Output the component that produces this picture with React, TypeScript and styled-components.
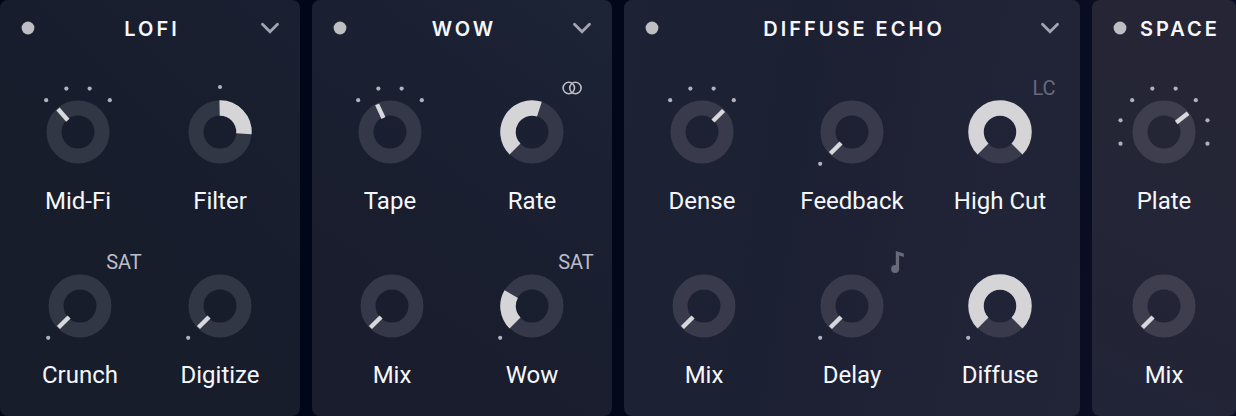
import React from "react";
import styled, { createGlobalStyle } from "styled-components";

const GlobalStyle = createGlobalStyle`
  *, *::before, *::after { box-sizing: border-box; }
  body {
    margin: 0;
    background: linear-gradient(100deg, #02051a 0%, #020719 50%, #0d1026 100%);
    color: #f6f7fb;
    font-family: Roboto, "Liberation Sans", sans-serif;
  }
`;

const Rack = styled.main`
  display: grid;
  grid-template-columns: 25fr 25fr 38fr 12fr;
  gap: 12px;
`;

const Panel = styled.section<{ $fill: string }>`
  display: flex;
  flex-direction: column;
  min-width: 0;
  padding-bottom: 26px;
  border-radius: 8px;
  background: ${(p) => p.$fill};
`;

const Header = styled.header`
  display: flex;
  align-items: center;
  height: 56px;
  padding: 0 16px 0 20px;
  margin-bottom: 28px;
`;

const IconButton = styled.button`
  display: grid;
  place-items: center;
  flex: none;
  padding: 0;
  border: 0;
  background: none;
  color: #a3a5b1;
  cursor: pointer;
`;

const PowerButton = styled(IconButton)`
  width: 16px;
  height: 24px;
`;

const PowerLight = styled.svg`
  display: block;
`;

const ExpandButton = styled(IconButton)`
  width: 28px;
  height: 28px;
`;

const Title = styled.h2<{ $compact?: boolean }>`
  flex: 1;
  margin: 0;
  padding: 2px 0 0 12px;
  font: 600 20px/24px Inter, Roboto, sans-serif;
  letter-spacing: 3px;
  text-align: ${(p) => (p.$compact ? "left" : "center")};
  white-space: nowrap;
`;

const Rows = styled.div`
  display: flex;
  flex-direction: column;
  gap: 42px;
`;

const Row = styled.div<{ $columns: string; $padding: string }>`
  display: grid;
  grid-template-columns: ${(p) => p.$columns};
  padding: ${(p) => p.$padding};
`;

const Cell = styled.div`
  display: flex;
  flex-direction: column;
  align-items: center;
  gap: 6px;
  min-width: 0;
`;

const DialBox = styled.div`
  position: relative;
  width: 104px;
  height: 96px;
`;

const DialArt = styled.svg`
  display: block;
`;

const DialInput = styled.input`
  position: absolute;
  inset: 16px 20px;
  width: 64px;
  height: 64px;
  margin: 0;
  opacity: 0;
  cursor: pointer;
`;

const Badge = styled.button<{ $dim?: boolean }>`
  position: absolute;
  top: -8px;
  right: -16px;
  display: grid;
  place-items: center;
  width: 48px;
  height: 24px;
  padding: 0;
  border: 0;
  background: none;
  color: ${(p) => (p.$dim ? "#686a79" : "#bcbdc9")};
  font: 400 20px/24px Roboto, sans-serif;
  cursor: pointer;
`;

const KnobLabel = styled.label`
  font-size: 24px;
  line-height: 30px;
  white-space: nowrap;
`;

type BadgeKind = "SAT" | "LC" | "link" | "note";

interface KnobSpec {
  label: string;
  /* Angles are degrees clockwise from twelve o'clock. */
  angle: number;
  from?: number;
  dots?: number[];
  badge?: BadgeKind;
}

interface RowSpec {
  columns: string;
  padding: string;
  knobs: KnobSpec[];
}

interface PanelSpec {
  title: string;
  fill: string;
  ring: string;
  compact?: boolean;
  rows: RowSpec[];
}

const FOUR = [-45, -15, 15, 45];
const EIGHT = [-105, -75, -45, -15, 15, 45, 75, 105];
const START = [-135];

const panels: PanelSpec[] = [
  {
    title: "LOFI",
    fill: "linear-gradient(225deg, #1a2031 0%, #181d2d 45%, #181d2c 100%)",
    ring: "#323745",
    rows: [
      {
        columns: "1fr 1fr",
        padding: "0 9px 0 7px",
        knobs: [
          { label: "Mid-Fi", angle: -41, dots: FOUR },
          { label: "Filter", angle: 94, from: -1, dots: [0] },
        ],
      },
      {
        columns: "1fr 1fr",
        padding: "0 10px",
        knobs: [
          { label: "Crunch", angle: -135, dots: START, badge: "SAT" },
          { label: "Digitize", angle: -135, dots: START },
        ],
      },
    ],
  },
  {
    title: "WOW",
    fill: "linear-gradient(215deg, #1c2436 0%, #1a1f31 40%, #191d2d 75%, #1a1d2e 100%)",
    ring: "#343848",
    rows: [
      {
        columns: "1fr 1fr",
        padding: "0 9px 0 7px",
        knobs: [
          { label: "Tape", angle: -25, dots: FOUR },
          { label: "Rate", angle: 18, from: -135, badge: "link" },
        ],
      },
      {
        columns: "1fr 1fr",
        padding: "0 10px",
        knobs: [
          { label: "Mix", angle: -135 },
          { label: "Wow", angle: -60, from: -135, dots: START, badge: "SAT" },
        ],
      },
    ],
  },
  {
    title: "DIFFUSE ECHO",
    fill: "linear-gradient(100deg, #1c2335 0%, #1c2033 35%, #202235 65%, #222538 100%)",
    ring: "#393b4c",
    rows: [
      {
        columns: "148fr 152fr 144fr",
        padding: "0 8px 0 4px",
        knobs: [
          { label: "Dense", angle: 45, dots: FOUR },
          { label: "Feedback", angle: -135, dots: START },
          { label: "High Cut", angle: 135, from: -135, badge: "LC" },
        ],
      },
      {
        columns: "1fr 1fr 1fr",
        padding: "0 6px",
        knobs: [
          { label: "Mix", angle: -135 },
          { label: "Delay", angle: -135, dots: START, badge: "note" },
          { label: "Diffuse", angle: 135, from: -135, dots: START },
        ],
      },
    ],
  },
  {
    title: "SPACE",
    fill: "linear-gradient(205deg, #262535 0%, #242536 50%, #212437 100%)",
    ring: "#3e3e4e",
    compact: true,
    rows: [
      {
        columns: "1fr",
        padding: "0",
        knobs: [{ label: "Plate", angle: 52, dots: EIGHT }],
      },
      {
        columns: "1fr",
        padding: "0",
        knobs: [{ label: "Mix", angle: -135 }],
      },
    ],
  },
];

const polar = (angle: number, radius: number) => {
  const rad = (angle * Math.PI) / 180;
  return { x: Math.sin(rad) * radius, y: -Math.cos(rad) * radius };
};

const arcPath = (from: number, to: number, radius: number) => {
  const a = polar(from, radius);
  const b = polar(to, radius);
  const large = to - from > 180 ? 1 : 0;
  return `M${a.x} ${a.y}A${radius} ${radius} 0 ${large} 1 ${b.x} ${b.y}`;
};

function Pointer({ angle }: { angle: number }) {
  const a = polar(angle, 15.5);
  const b = polar(angle, 30.5);
  return <line x1={a.x} y1={a.y} x2={b.x} y2={b.y} stroke="#d8d9dc" strokeWidth="4.4" />;
}

function LinkIcon() {
  return (
    <svg width="28" height="14" viewBox="0 0 28 14" fill="none" stroke="currentColor" strokeWidth="1.6">
      <circle cx="6.8" cy="7" r="5.7" />
      <circle cx="13.4" cy="7" r="5.7" />
    </svg>
  );
}

function NoteIcon() {
  return (
    <svg width="16" height="24" viewBox="-3 0 16 24" fill="currentColor">
      <circle cx="4.1" cy="19" r="4" />
      <path d="M4.8 1 12.8 3.6V7L8.1 5.6V19H4.8Z" />
    </svg>
  );
}

function DialBadge({ kind }: { kind: BadgeKind }) {
  if (kind === "link") {
    return (
      <Badge type="button" aria-label="Link stereo">
        <LinkIcon />
      </Badge>
    );
  }
  if (kind === "note") {
    return (
      <Badge type="button" aria-label="Tempo sync" $dim>
        <NoteIcon />
      </Badge>
    );
  }
  return (
    <Badge type="button" $dim={kind === "LC"}>
      {kind}
    </Badge>
  );
}

function Knob({ id, spec, ring }: { id: string; spec: KnobSpec; ring: string }) {
  const { label, angle, from, dots = [], badge } = spec;
  return (
    <Cell>
      <DialBox>
        <DialArt width="104" height="96" viewBox="-52 -48 104 96" aria-hidden="true">
          <circle r="24" fill="none" stroke={ring} strokeWidth="15" />
          {from === undefined ? (
            <Pointer angle={angle} />
          ) : (
            <path d={arcPath(from, angle, 24)} fill="none" stroke="#d5d5d7" strokeWidth="15.5" />
          )}
          {dots.map((dot) => {
            const p = polar(dot, 45);
            return <circle key={dot} cx={p.x} cy={p.y} r="2.1" fill="#b0b1bb" />;
          })}
        </DialArt>
        <DialInput id={id} type="range" min={-135} max={135} defaultValue={angle} />
        {badge && <DialBadge kind={badge} />}
      </DialBox>
      <KnobLabel htmlFor={id}>{label}</KnobLabel>
    </Cell>
  );
}

function EffectPanel({ spec }: { spec: PanelSpec }) {
  const { title, fill, ring, compact, rows } = spec;
  return (
    <Panel $fill={fill} aria-label={title}>
      <Header>
        <PowerButton type="button" aria-label={`${title} power`}>
          <PowerLight width="16" height="16" viewBox="0 0 16 16" fill="#bebec3">
            <circle cx="8" cy="8" r="6.4" />
          </PowerLight>
        </PowerButton>
        <Title $compact={compact}>{title}</Title>
        {!compact && (
          <ExpandButton type="button" aria-label={`${title} options`}>
            <svg width="20" height="12" viewBox="0 0 20 12" fill="none" stroke="currentColor" strokeWidth="2.8" strokeLinecap="round">
              <path d="M2.5 2.3 10 9.7 17.5 2.3" />
            </svg>
          </ExpandButton>
        )}
      </Header>
      <Rows>
        {rows.map((row, r) => (
          <Row key={r} $columns={row.columns} $padding={row.padding}>
            {row.knobs.map((knob) => (
              <Knob key={knob.label} id={`${title}-${knob.label}`.replace(/\s/g, "-").toLowerCase()} spec={knob} ring={ring} />
            ))}
          </Row>
        ))}
      </Rows>
    </Panel>
  );
}

export default function App() {
  return (
    <>
      <GlobalStyle />
      <Rack>
        {panels.map((panel) => (
          <EffectPanel key={panel.title} spec={panel} />
        ))}
      </Rack>
    </>
  );
}
